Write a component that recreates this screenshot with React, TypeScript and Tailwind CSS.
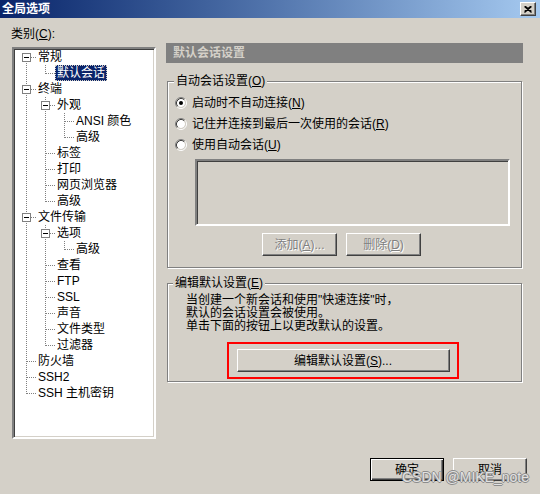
import React from 'react'

type Node = { label: React.ReactNode; children?: Node[]; selected?: boolean }

type Row = {
	label: React.ReactNode
	level: number
	cont: boolean[]
	last: boolean
	first: boolean
	hasChildren: boolean
	selected?: boolean
}

const tree: Node[] = [
	{ label: '常规', children: [{ label: '默认会话', selected: true }] },
	{
		label: '终端',
		children: [
			{ label: '外观', children: [{ label: 'ANSI 颜色' }, { label: '高级' }] },
			{ label: '标签' },
			{ label: '打印' },
			{ label: '网页浏览器' },
			{ label: '高级' },
		],
	},
	{
		label: '文件传输',
		children: [
			{ label: '选项', children: [{ label: '高级' }] },
			{ label: '查看' },
			{ label: 'FTP' },
			{ label: 'SSL' },
			{ label: '声音' },
			{ label: '文件类型' },
			{ label: '过滤器' },
		],
	},
	{ label: '防火墙' },
	{ label: 'SSH2' },
	{ label: 'SSH 主机密钥' },
]

function flatten(nodes: Node[], level: number, cont: boolean[], out: Row[]) {
	nodes.forEach((n, i) => {
		const last = i === nodes.length - 1
		out.push({
			label: n.label,
			level,
			cont,
			last,
			first: level === 0 && i === 0,
			hasChildren: !!n.children,
			selected: n.selected,
		})
		if (n.children) flatten(n.children, level + 1, [...cont, !last], out)
	})
}

const rows: Row[] = []
flatten(tree, 0, [], rows)

const dot = '#808080'

function TreeCell({ row, col }: { row: Row; col: number }) {
	const own = col === row.level
	return (
		<svg width="19" height="16" className="shrink-0 block">
			{!own && row.cont[col] && (
				<line x1="9.5" y1="0" x2="9.5" y2="16" stroke={dot} strokeDasharray="1 1" />
			)}
			{own && (
				<>
					<line
						x1="9.5"
						y1={row.first ? 8 : 0}
						x2="9.5"
						y2={row.last ? 9 : 16}
						stroke={dot}
						strokeDasharray="1 1"
					/>
					<line x1="10" y1="8.5" x2="19" y2="8.5" stroke={dot} strokeDasharray="1 1" />
					{row.hasChildren && (
						<>
							<rect x="5.5" y="4.5" width="8" height="8" fill="#fff" stroke={dot} />
							<line x1="7" y1="8.5" x2="12" y2="8.5" stroke="#000" />
						</>
					)}
				</>
			)}
		</svg>
	)
}

function Radio({ checked }: { checked?: boolean }) {
	return (
		<svg width="12" height="12" className="shrink-0 block">
			<circle cx="6" cy="6" r="4" fill="#fff" />
			<path d="M2.11 9.89 A5.5 5.5 0 0 1 9.89 2.11" fill="none" stroke="#808080" />
			<path d="M9.89 2.11 A5.5 5.5 0 0 1 2.11 9.89" fill="none" stroke="#fff" />
			<path d="M2.82 9.18 A4.5 4.5 0 0 1 9.18 2.82" fill="none" stroke="#404040" />
			<path d="M9.18 2.82 A4.5 4.5 0 0 1 2.82 9.18" fill="none" stroke="#d4d0c8" />
			{checked && <circle cx="6" cy="6" r="2" fill="#000" />}
		</svg>
	)
}

const btn =
	'flex items-center justify-center border border-t-white border-l-white border-b-[#404040] border-r-[#404040] shadow-[inset_-1px_-1px_0_#808080] bg-[#d4d0c8] text-[12px]'

const disabledText = 'text-[#808080] [text-shadow:1px_1px_0_#fff]'

export default function App() {
	return (
		<div className="relative w-[540px] h-[494px] bg-[#d4d0c8] flex flex-col text-[12px] text-black font-['Liberation_Sans','Noto_Sans_CJK_SC',sans-serif] overflow-hidden">
			{/* title bar */}
			<div className="h-[18px] flex items-center justify-between bg-gradient-to-r from-[#0a246a] to-[#a6caf0] pl-[2px] pr-[4px]">
				<span className="text-white font-bold text-[12px] leading-[18px]">全局选项</span>
				<div className="w-[16px] h-[14px] flex items-center justify-center border border-t-white border-l-white border-b-[#404040] border-r-[#404040] shadow-[inset_-1px_-1px_0_#808080] bg-[#d4d0c8]">
					<svg width="8" height="7" className="block">
						<path d="M0.5 0.5 L7.5 6.5 M7.5 0.5 L0.5 6.5 M1.5 0.5 L7.5 5.5 M6.5 0.5 L0.5 5.5" stroke="#000" strokeWidth="1.2" />
					</svg>
				</div>
			</div>

			<div className="flex pl-[11px] pt-[9px]">
				{/* categories */}
				<div className="w-[145px] flex flex-col">
					<div className="h-[14px] leading-[14px]">
						类别(<u>C</u>):
					</div>
					<div className="mt-[6px] ml-[1px] w-[144px] h-[392px] bg-white border-2 border-t-[#808080] border-l-[#808080] border-b-white border-r-white shadow-[inset_1px_1px_0_#404040,inset_-1px_-1px_0_#d4d0c8]">
						<div className="flex flex-col pl-[3px]">
							{rows.map((row, i) => (
								<div key={i} className="flex h-[16px] items-center">
									{Array.from({ length: row.level + 1 }).map((_, c) => (
										<TreeCell key={c} row={row} col={c} />
									))}
									<span
										className={`h-[16px] leading-[16px] px-[2px] whitespace-nowrap ${
											row.selected
												? 'bg-[#0a246a] text-white outline-1 outline-dotted outline-[#d4d0c8] -outline-offset-1'
												: ''
										}`}
									>
										{row.label}
									</span>
								</div>
							))}
						</div>
					</div>
				</div>

				{/* settings */}
				<div className="ml-[10px] mt-[16px] w-[357px] flex flex-col">
					<div className="h-[20px] leading-[20px] bg-[#808080] text-[#d4d0c8] font-bold px-[7px]">默认会话设置</div>

					<div className="relative mt-[18px] ml-[1px] w-[355px] h-[187px] border border-[#808080] shadow-[inset_1px_1px_0_#fff,1px_1px_0_#fff] flex flex-col">
						<span className="absolute -top-[9px] left-[6px] bg-[#d4d0c8] px-[2px] leading-[16px]">
							自动会话设置(<u>O</u>)
						</span>
						<div className="flex flex-col pt-[10px] pl-[7px]">
							<div className="h-[21px] flex items-center gap-[5px]">
								<Radio checked />
								<span>
									启动时不自动连接(<u>N</u>)
								</span>
							</div>
							<div className="h-[21px] flex items-center gap-[5px]">
								<Radio />
								<span>
									记住并连接到最后一次使用的会话(<u>R</u>)
								</span>
							</div>
							<div className="h-[21px] flex items-center gap-[5px]">
								<Radio />
								<span>
									使用自动会话(<u>U</u>)
								</span>
							</div>
						</div>
						<div className="mt-[4px] ml-[27px] w-[315px] h-[67px] border-2 border-t-[#808080] border-l-[#808080] border-b-white border-r-white shadow-[inset_1px_1px_0_#404040,inset_-1px_-1px_0_#d4d0c8]" />
						<div className="mt-[7px] ml-[94px] flex gap-[9px]">
							<div className={`${btn} w-[75px] h-[23px] ${disabledText}`}>
								添加(<u>A</u>)...
							</div>
							<div className={`${btn} w-[75px] h-[23px] ${disabledText}`}>
								删除(<u>D</u>)
							</div>
						</div>
					</div>

					<div className="relative mt-[15px] ml-[1px] w-[355px] h-[99px] border border-[#808080] shadow-[inset_1px_1px_0_#fff,1px_1px_0_#fff] flex flex-col">
						<span className="absolute -top-[9px] left-[5px] bg-[#d4d0c8] px-[2px] leading-[16px]">
							编辑默认设置(<u>E</u>)
						</span>
						<div className="pt-[10px] pl-[18px] leading-[13px] flex flex-col">
							<span>当创建一个新会话和使用"快速连接"时，</span>
							<span>默认的会话设置会被使用。</span>
							<span>单击下面的按钮上以更改默认的设置。</span>
						</div>
						<div className="mt-[9px] ml-[59px] w-[232px] h-[37px] border-2 border-[#ff0000] flex items-center justify-center">
							<div className={`${btn} w-[213px] h-[23px]`}>
								编辑默认设置(<u>S</u>)...
							</div>
						</div>
					</div>
				</div>
			</div>

			{/* dialog buttons */}
			<div className="mt-[19px] flex justify-end gap-[9px] pr-[13px]">
				<div className="w-[74px] h-[23px] flex items-center justify-center border border-black shadow-[inset_1px_1px_0_#fff,inset_-1px_-1px_0_#404040,inset_-2px_-2px_0_#808080] bg-[#d4d0c8]">
					确定
				</div>
				<div className={`${btn} w-[74px] h-[23px]`}>取消</div>
			</div>

			{/* watermark */}
			<span className="absolute left-[402px] top-[467px] text-[14px] font-['Liberation_Sans',sans-serif] text-[rgba(255,255,255,0.75)] [text-shadow:1px_0_0_#8c8c8c,-1px_0_0_#8c8c8c,0_1px_0_#8c8c8c,0_-1px_0_#8c8c8c] pointer-events-none">
				CSDN @MIKE_note
			</span>
		</div>
	)
}
